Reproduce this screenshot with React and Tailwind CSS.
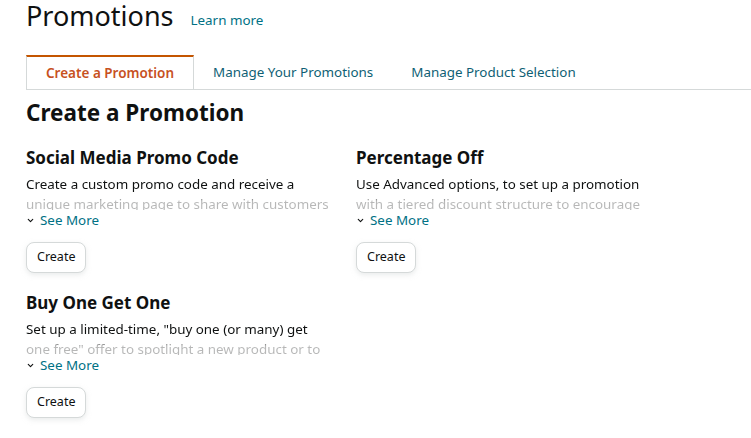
import { ChevronDown } from 'lucide-react';

const promos = [
  {
    title: 'Social Media Promo Code',
    text: 'Create a custom promo code and receive a unique marketing page to share with customers on social media.',
  },
  {
    title: 'Percentage Off',
    text: 'Use Advanced options, to set up a promotion with a tiered discount structure to encourage customers to buy more.',
  },
  {
    title: 'Buy One Get One',
    text: 'Set up a limited-time, "buy one (or many) get one free" offer to spotlight a new product or to clear out inventory.',
  },
];

function PromoCard({ title, text }) {
  return (
    <div className="flex flex-col items-start">
      <h3 className="text-[17px] leading-6 font-bold text-[#0f1111]">{title}</h3>
      <p className="mt-[4px] text-[13.4px] leading-5 text-[#0f1111] h-[36px] overflow-hidden [mask-image:linear-gradient(to_bottom,black_55%,rgba(0,0,0,0.3)_75%,rgba(0,0,0,0.3))]">
        {text}
      </p>
      <button className="flex items-center gap-[5px] text-[13.4px] leading-5 text-[#007185]">
        <ChevronDown className="w-[9px] h-[9px] text-[#0f1111]" strokeWidth={3} />
        See More
      </button>
      <button className="mt-[12px] h-[31px] px-[10px] rounded-lg border border-[#d5d9d9] bg-white text-[12.5px] text-[#0f1111] shadow-[0_2px_5px_rgba(213,217,217,0.5)]">
        Create
      </button>
    </div>
  );
}

export default function App() {
  return (
    <div className="min-h-screen bg-white px-[26px] font-['Noto_Sans',sans-serif]">
      {/* Header */}
      <div className="flex items-end gap-[17px] pt-[1px]">
        <h1 className="text-[27px] leading-[30px] text-[#0f1111]">Promotions</h1>
        <a className="text-[13.4px] leading-5 text-[#007185] mb-[1px]">Learn more</a>
      </div>

      {/* Tabs */}
      <div className="mt-[24px] flex border-b border-[#d5d9d9] -mr-[26px]">
        <div className="h-[34px] pt-px px-[19px] flex items-center border-t-2 border-t-[#c45500] border-x border-x-[#d5d9d9] -mb-px bg-white text-[13.5px] font-semibold text-[#c7511f]">
          Create a Promotion
        </div>
        <div className="h-[34px] pt-px px-[19px] flex items-center text-[13.4px] text-[#0f5f75]">
          Manage Your Promotions
        </div>
        <div className="h-[34px] pt-px px-[19px] flex items-center text-[13.4px] text-[#0f5f75]">
          Manage Product Selection
        </div>
      </div>

      <h2 className="mt-[7px] text-[22.5px] leading-8 font-bold text-[#0f1111]">Create a Promotion</h2>

      <div className="mt-[17px] grid grid-cols-[305px_305px] gap-x-[25px] gap-y-[18px]">
        {promos.map((p) => (
          <PromoCard key={p.title} {...p} />
        ))}
      </div>
    </div>
  );
}
